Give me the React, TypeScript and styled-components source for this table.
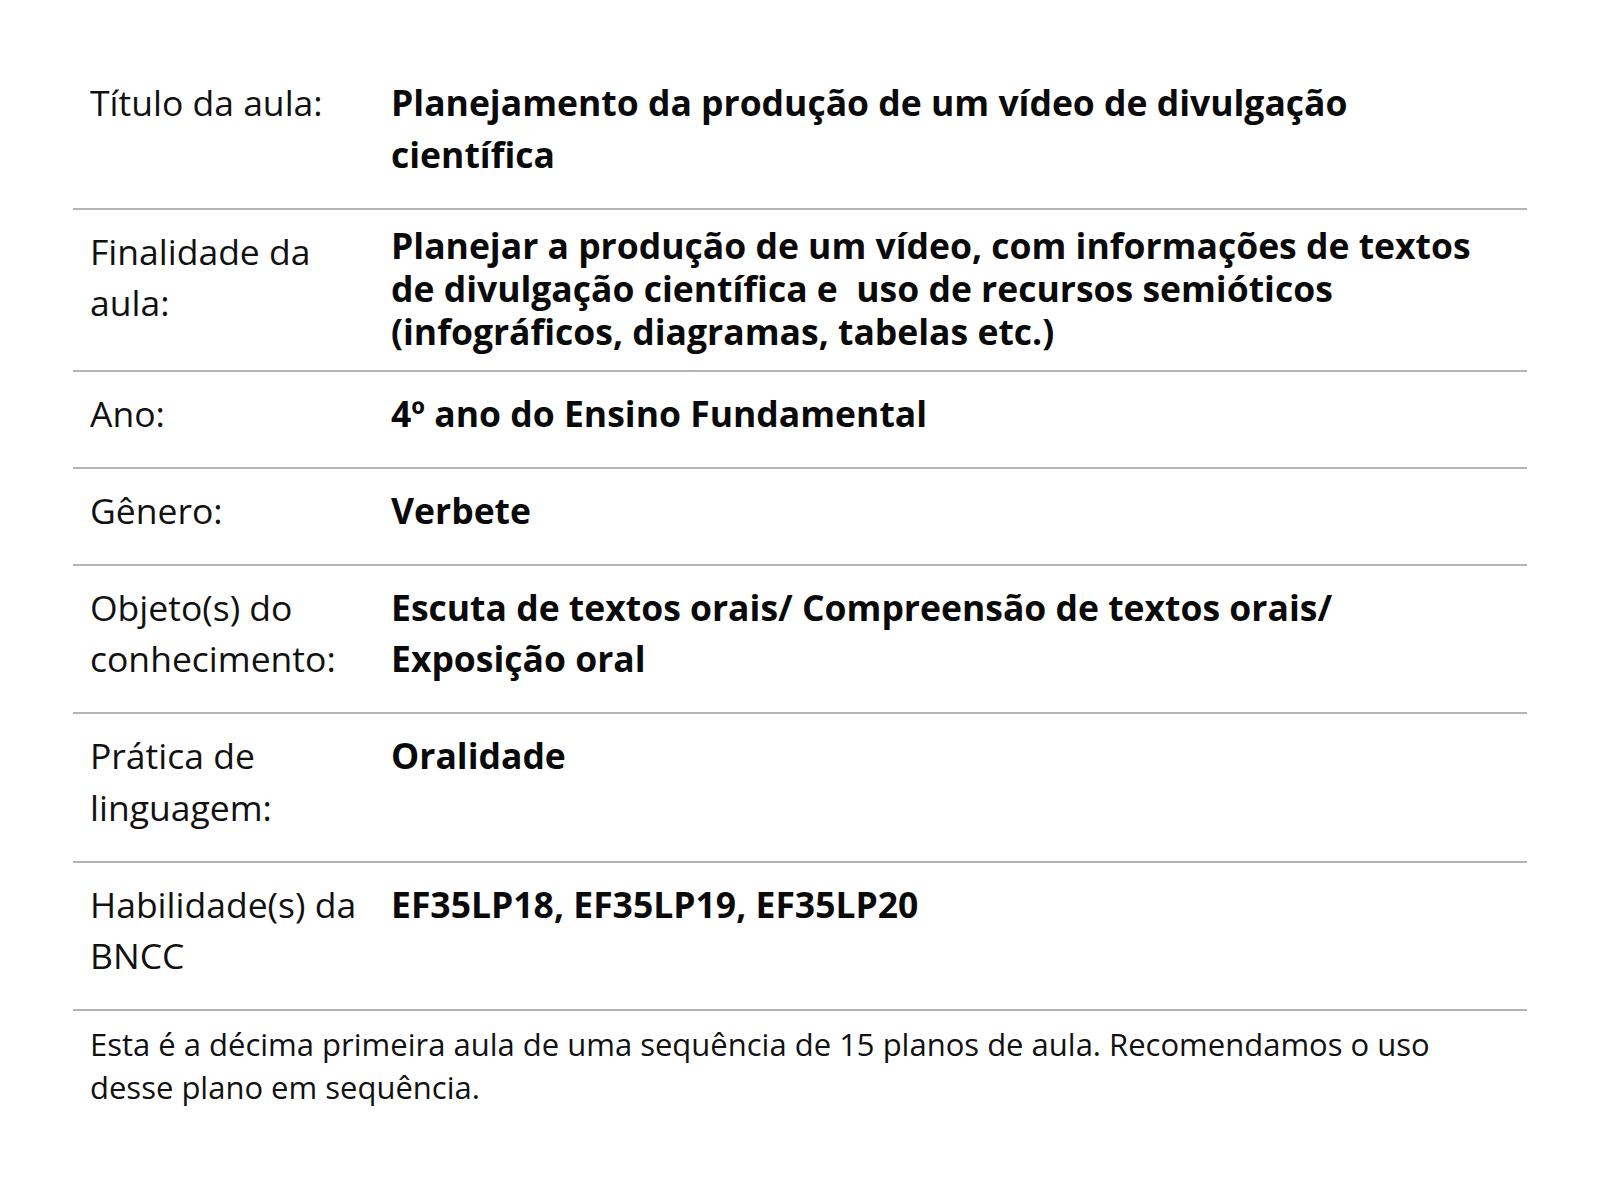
import React from 'react';
import styled, { createGlobalStyle, css } from 'styled-components';

interface IRow {
  label: string;
  value: React.ReactNode;
  compact?: boolean;
}

const rows: IRow[] = [
  {
    label: 'Título da aula:',
    value: 'Planejamento da produção de um vídeo de divulgação científica',
  },
  {
    label: 'Finalidade da aula:',
    value:
      'Planejar a produção de um vídeo, com informações de textos de divulgação científica e\u00a0 uso de recursos semióticos (infográficos, diagramas, tabelas etc.)',
    compact: true,
  },
  { label: 'Ano:', value: '4º ano do Ensino Fundamental' },
  { label: 'Gênero:', value: 'Verbete' },
  {
    label: 'Objeto(s) do conhecimento:',
    value: 'Escuta de textos orais/ Compreensão de textos orais/ Exposição oral',
  },
  { label: 'Prática de linguagem:', value: 'Oralidade' },
  { label: 'Habilidade(s) da BNCC', value: 'EF35LP18, EF35LP19, EF35LP20' },
];

function App() {
  return (
    <>
      <GlobalStyle />
      <Page>
        <PlanTable>
          {rows.map((row) => (
            <Row key={row.label}>
              <Label>{row.label}</Label>
              <Value compact={row.compact}>{row.value}</Value>
            </Row>
          ))}
        </PlanTable>
        <Note>
          Esta é a décima primeira aula de uma sequência de 15 planos de aula. Recomendamos o uso
          desse plano em sequência.
        </Note>
      </Page>
    </>
  );
}

export default App;

const GlobalStyle = createGlobalStyle`
  html, body {
    margin: 0;
    padding: 0;
    background: #ffffff;
  }

  body {
    font-family: 'Open Sans', 'Noto Sans', sans-serif;
    color: #111111;
  }
`;

const Page = styled.main`
  width: 1454px;
  margin: 0 auto;
  padding-top: 61px;
  box-sizing: border-box;
`;

const PlanTable = styled.section`
  display: flex;
  flex-direction: column;
`;

const Row = styled.div`
  display: grid;
  grid-template-columns: 302px 1fr;
  align-items: start;
  border-bottom: 2px solid #b4b4b4;
`;

const Label = styled.div`
  padding: 16px 6px 27.5px 17px;
  font-size: 35.5px;
  line-height: 51.5px;
  font-weight: 400;
  color: #111111;
`;

const Value = styled.div<{ compact?: boolean }>`
  max-width: 1100px;
  padding: 16px 16px 27.5px 16px;
  font-size: 35.5px;
  line-height: 51.5px;
  font-weight: 700;
  color: #0a0a0a;

  ${(props) =>
    props.compact &&
    css`
      padding: 14px 16px 17px 16px;
      line-height: 43px;
    `}
`;

const Note = styled.p`
  margin: 0;
  padding: 12px 16px 0 17px;
  font-size: 31px;
  line-height: 43px;
  color: #111111;
`;
